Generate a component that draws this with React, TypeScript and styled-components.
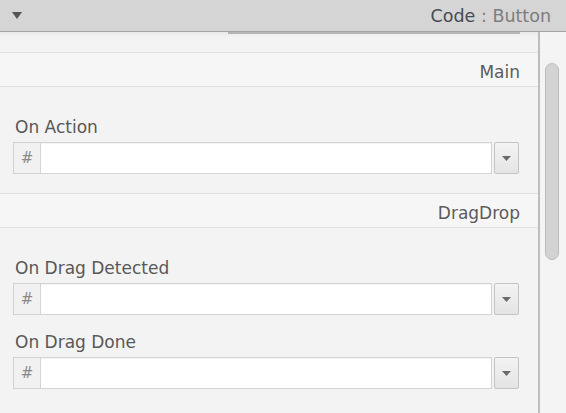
import React from "react";
import styled, { createGlobalStyle } from "styled-components";

const Global = createGlobalStyle`
  html, body { margin: 0; padding: 0; background: #f3f3f3; }
  body { width: 566px; height: 413px; overflow: hidden; font-family: "DejaVu Sans", Verdana, sans-serif; }
`;

const Panel = styled.div`
  width: 566px;
  height: 413px;
  display: flex;
  flex-direction: column;
  background: #f3f3f3;
  overflow: hidden;
`;

const TitleBar = styled.div`
  height: 31px;
  flex: none;
  display: flex;
  align-items: center;
  justify-content: space-between;
  padding: 0 15px 0 12px;
  background: #d5d5d5;
  border-bottom: 1px solid #a3a3a3;
  font-size: 17.5px;
  line-height: 20px;
`;

const TitleText = styled.div`
  white-space: nowrap;
`;

const TitleStrong = styled.span`
  color: #474a52;
`;

const TitleDim = styled.span`
  color: #7d7d7d;
`;

const Body = styled.div`
  flex: 1;
  display: flex;
  min-height: 0;
`;

const Content = styled.div`
  flex: 1;
  min-width: 0;
  display: flex;
  flex-direction: column;
`;

const TopStrip = styled.div`
  height: 20px;
  flex: none;
  display: flex;
  justify-content: flex-end;
  align-items: flex-start;
  padding-right: 18px;
  background: linear-gradient(#e9e9e9, #f3f3f3 5px);
  border-bottom: 1px solid #e1e1e1;
`;

const ShadowLine = styled.div`
  width: 292px;
  height: 2px;
  background: #b4b4b4;
`;

const SectionHeader = styled.div`
  height: 34px;
  flex: none;
  box-sizing: border-box;
  display: flex;
  align-items: center;
  justify-content: flex-end;
  padding: 5px 18px 0 0;
  background: #f6f6f6;
  border-bottom: 1px solid #e1e1e1;
  color: #5c5c5c;
  font-size: 17px;
  line-height: 20px;
`;

const SectionBody = styled.div<{ $last?: boolean }>`
  display: flex;
  flex-direction: column;
  gap: 17px;
  padding: 30px 19px 19px 13px;
  border-bottom: ${(p) => (p.$last ? "none" : "1px solid #e1e1e1")};
  flex: none;
`;

const Field = styled.div`
  display: flex;
  flex-direction: column;
  gap: 5px;
`;

const Label = styled.div`
  font-size: 17px;
  line-height: 20px;
  color: #585858;
  padding-left: 2px;
  white-space: nowrap;
`;

const InputRow = styled.div`
  display: flex;
  height: 32px;
`;

const HashBox = styled.div`
  width: 27px;
  box-sizing: border-box;
  border: 1px solid #d2d2d2;
  border-right: none;
  background: #f1f1f1;
  color: #8a8a8a;
  font-size: 15px;
  display: flex;
  align-items: center;
  justify-content: center;
`;

const TextBox = styled.div`
  flex: 1;
  box-sizing: border-box;
  border: 1px solid #d4d4d4;
  background: #fff;
  box-shadow: inset 0 1px 1px rgba(0, 0, 0, 0.05);
`;

const DropButton = styled.div`
  width: 25px;
  margin-left: 2px;
  box-sizing: border-box;
  border: 1px solid #c4c4c4;
  border-radius: 2px;
  background: linear-gradient(#f3f3f3, #e4e4e4);
  display: flex;
  align-items: center;
  justify-content: center;
`;

const ScrollTrack = styled.div`
  width: 28px;
  flex: none;
  box-sizing: border-box;
  border-left: 2px solid #bdbdbd;
  padding: 31px 7px 0 5px;
  background: #f4f4f4;
`;

const Thumb = styled.div`
  width: 14px;
  height: 197px;
  box-sizing: border-box;
  border: 1px solid #bcbcbc;
  border-radius: 7px;
  background: #d3d3d3;
`;

const Caret = ({ w, h, color }: { w: number; h: number; color: string }) => (
  <svg width={w} height={h} viewBox={`0 0 ${w} ${h}`}>
    <polygon points={`0,0 ${w},0 ${w / 2},${h}`} fill={color} />
  </svg>
);

const CodeField = ({ label }: { label: string }) => (
  <Field>
    <Label>{label}</Label>
    <InputRow>
      <HashBox>#</HashBox>
      <TextBox />
      <DropButton>
        <Caret w={9} h={5} color="#6a6a6a" />
      </DropButton>
    </InputRow>
  </Field>
);

export default function App() {
  return (
    <>
      <Global />
      <Panel>
        <TitleBar>
          <Caret w={10} h={7} color="#555" />
          <TitleText>
            <TitleStrong>Code</TitleStrong>
            <TitleDim> : Button</TitleDim>
          </TitleText>
        </TitleBar>
        <Body>
          <Content>
            <TopStrip>
              <ShadowLine />
            </TopStrip>
            <SectionHeader>Main</SectionHeader>
            <SectionBody>
              <CodeField label="On Action" />
            </SectionBody>
            <SectionHeader>DragDrop</SectionHeader>
            <SectionBody $last>
              <CodeField label="On Drag Detected" />
              <CodeField label="On Drag Done" />
            </SectionBody>
          </Content>
          <ScrollTrack>
            <Thumb />
          </ScrollTrack>
        </Body>
      </Panel>
    </>
  );
}
